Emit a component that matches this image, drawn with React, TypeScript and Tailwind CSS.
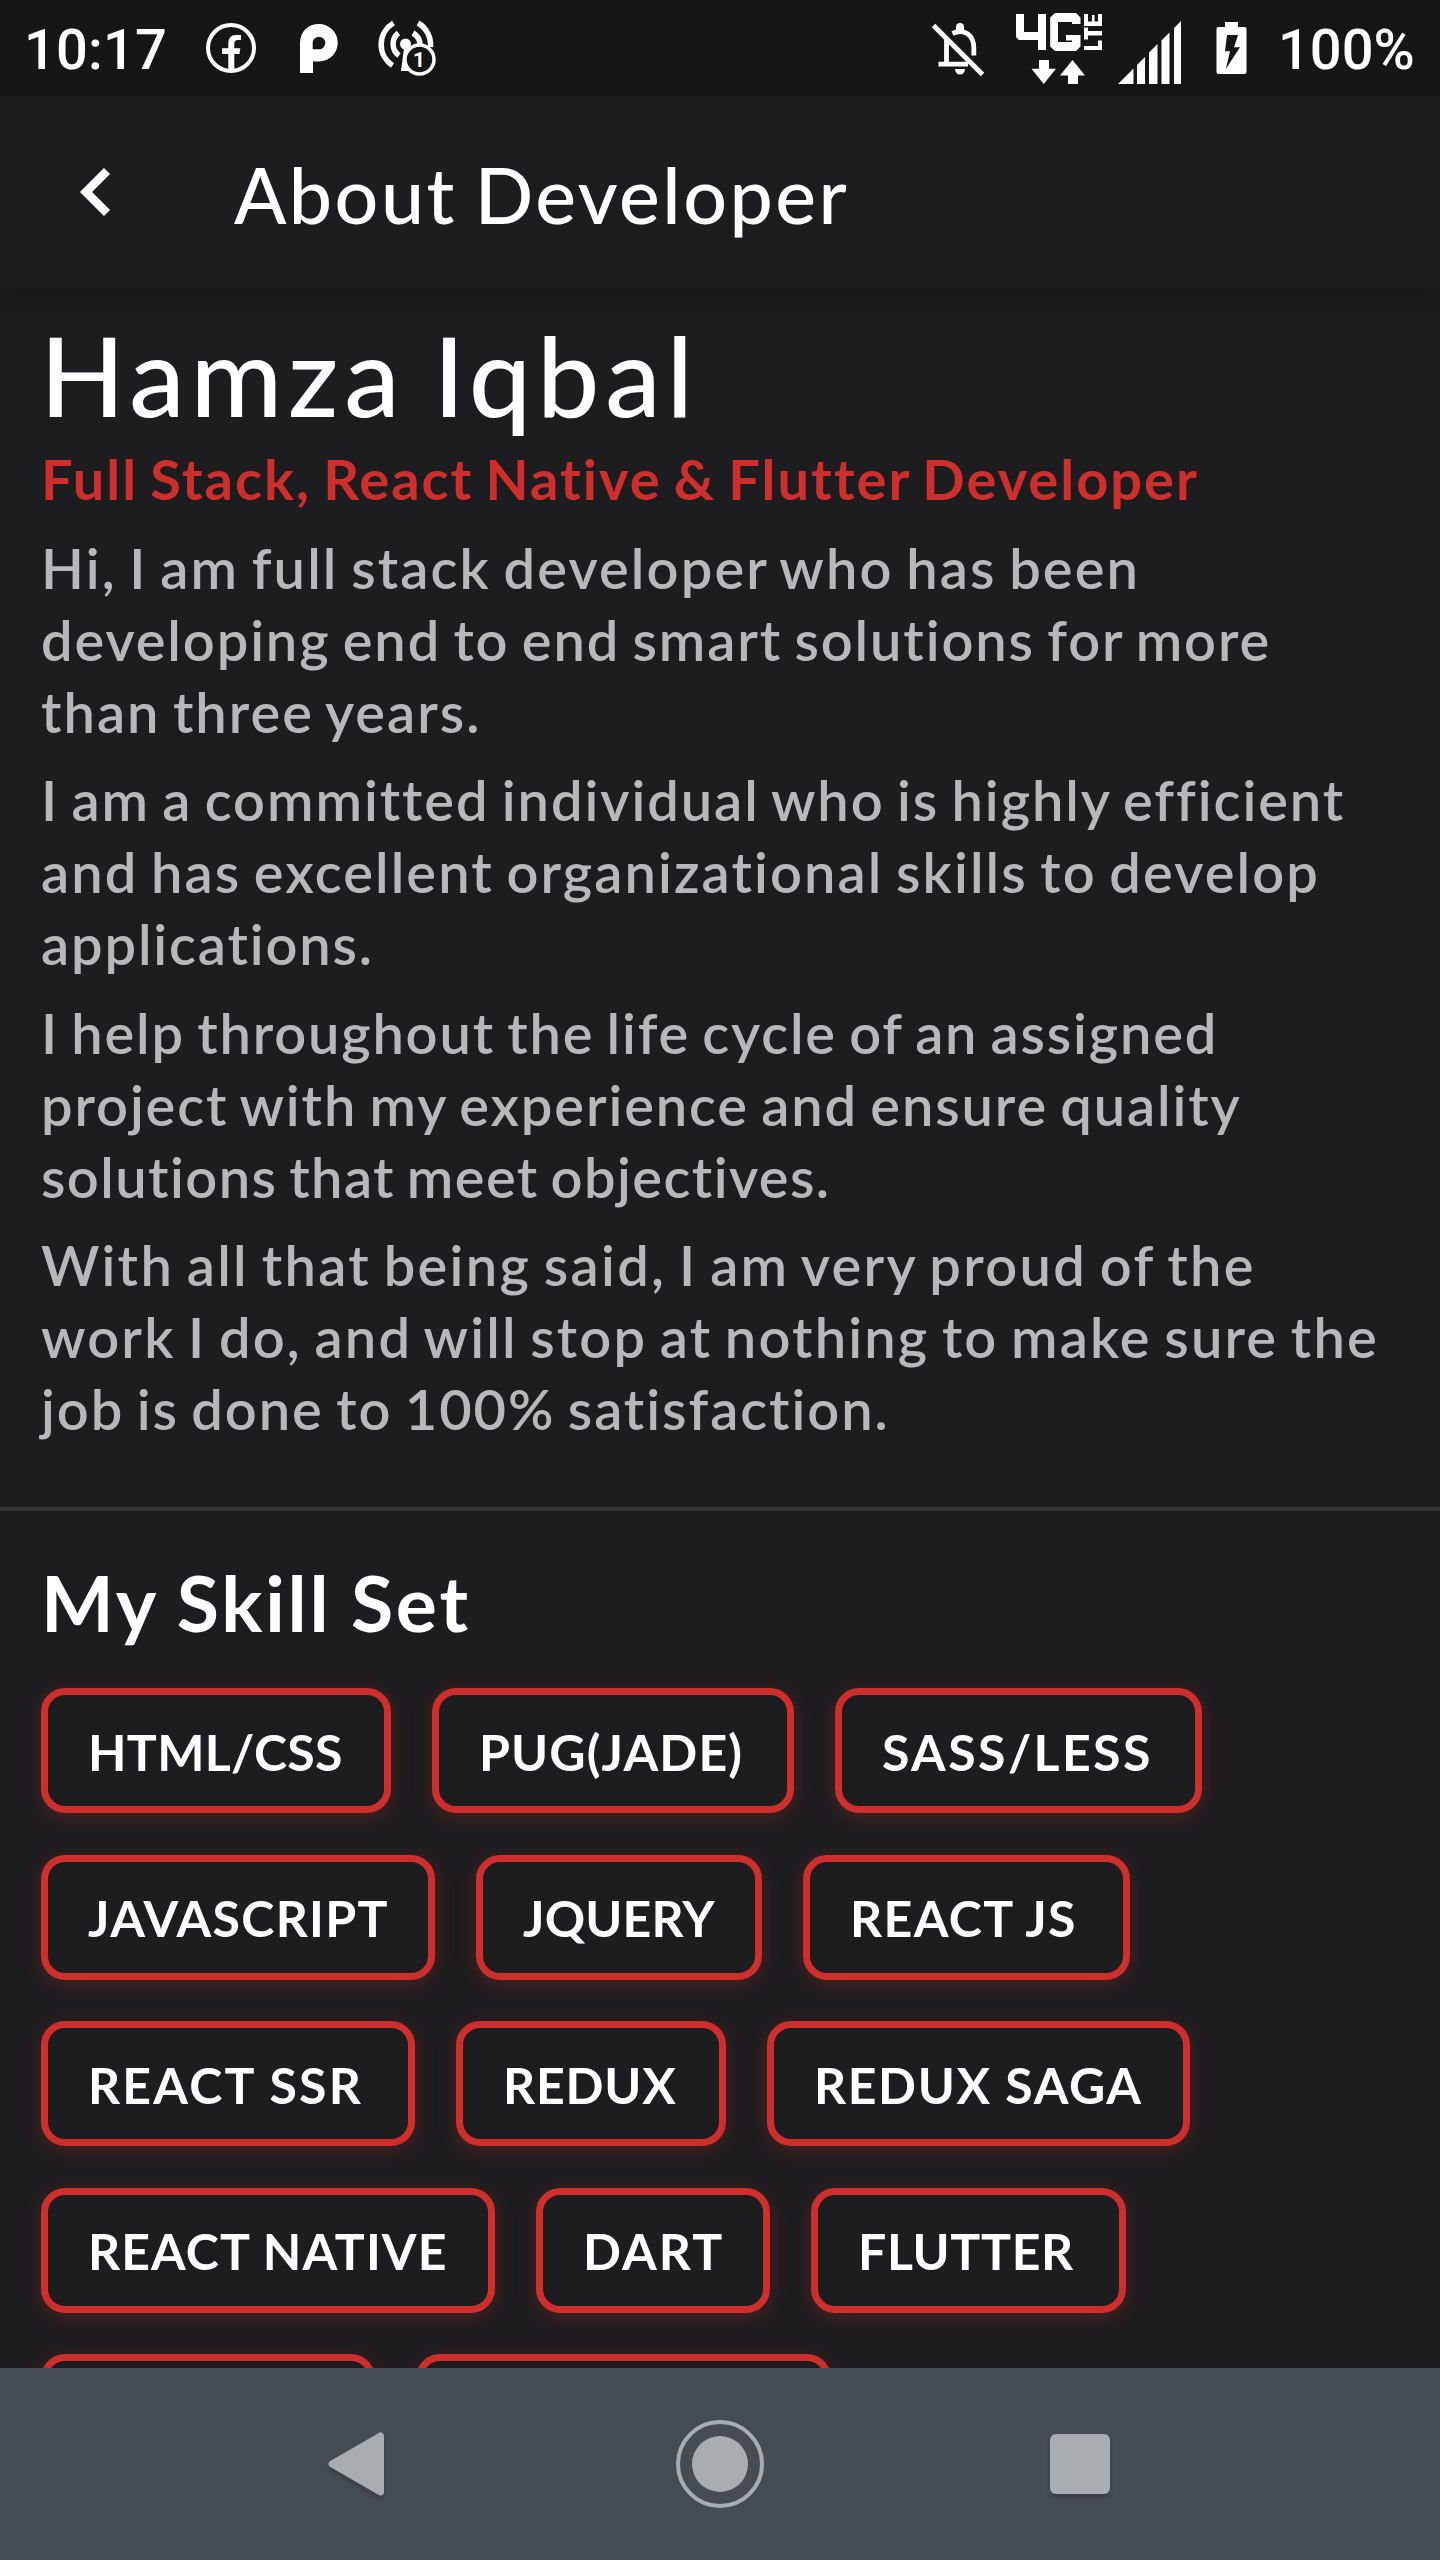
type Line = { text: string; tracking: string };

const paragraphs: Line[][] = [
  [
    { text: "Hi, I am full stack developer who has been", tracking: "tracking-[2.13px]" },
    { text: "developing end to end smart solutions for more", tracking: "tracking-[1.88px]" },
    { text: "than three years.", tracking: "tracking-[2px]" },
  ],
  [
    { text: "I am a committed individual who is highly efficient", tracking: "tracking-[1.93px]" },
    { text: "and has excellent organizational skills to develop", tracking: "tracking-[2.1px]" },
    { text: "applications.", tracking: "tracking-[1.85px]" },
  ],
  [
    { text: "I help throughout the life cycle of an assigned", tracking: "tracking-[1.82px]" },
    { text: "project with my experience and ensure quality", tracking: "tracking-[1.87px]" },
    { text: "solutions that meet objectives.", tracking: "tracking-[1.42px]" },
  ],
  [
    { text: "With all that being said, I am very proud of the", tracking: "tracking-[2.29px]" },
    { text: "work I do, and will stop at nothing to make sure the", tracking: "tracking-[2.15px]" },
    { text: "job is done to 100% satisfaction.", tracking: "tracking-[1.95px]" },
  ],
];

const skillRows: { name: string; style: string }[][] = [
  [
    { name: "HTML/CSS", style: "w-[350px] tracking-[0.3px]" },
    { name: "PUG(JADE)", style: "w-[362px] tracking-[1.1px]" },
    { name: "SASS/LESS", style: "w-[367px] tracking-[2.4px]" },
  ],
  [
    { name: "JAVASCRIPT", style: "w-[394px] tracking-[1.300px]" },
    { name: "JQUERY", style: "w-[286px] tracking-[0.2px]" },
    { name: "REACT JS", style: "w-[327px] tracking-[1.4px]" },
  ],
  [
    { name: "REACT SSR", style: "w-[374px] tracking-[2.2px]" },
    { name: "REDUX", style: "w-[270px] tracking-[0.8px]" },
    { name: "REDUX SAGA", style: "w-[423px] tracking-[1.6px]" },
  ],
  [
    { name: "REACT NATIVE", style: "w-[454px] tracking-[1.1px]" },
    { name: "DART", style: "w-[234px] tracking-[2.1px]" },
    { name: "FLUTTER", style: "w-[315px] tracking-[0.65px]" },
  ],
  [
    { name: "", style: "w-[334px]" },
    { name: "", style: "w-[415px]" },
  ],
];

function StatusBar() {
  return (
    <div className="flex h-24 shrink-0 items-center justify-between bg-[#161616] font-[Roboto] text-[56px] leading-none font-medium text-white">
      <div className="flex items-center">
        <div className="w-[200px] pt-[3px] pl-[24px] tracking-[0.2px]">10:17</div>
        <svg className="h-24 w-[62px]" viewBox="200 0 62 96" fill="white">
          <circle cx="231" cy="48" r="23" fill="none" stroke="white" strokeWidth="4" />
          <path d="M228.3 72V54H222V48.3H228.3V44C228.3 38 231 35 236 35H241V40H238C235.5 40 234.3 41.5 234.3 44V48.3H240.3L239.5 54H234.3V72Z" />
        </svg>
        <svg className="h-24 w-[108px]" viewBox="262 0 108 96" fill="white">
          <path
            fillRule="evenodd"
            d="M300 73V43C300 31.500 308 24 319 24A18.700 18.700 0 0 1 319 61.500H313V73ZM312.700 49.300V43A6.300 6.300 0 1 1 319 49.300Z"
          />
        </svg>
        <svg className="h-24 w-[70px]" viewBox="370 0 70 96" fill="none" stroke="white">
          <path
            d="M393.500 23A25 25 0 0 0 392.500 65.500M418 23A25 25 0 0 1 430.500 47M398.500 33A14 14 0 0 0 399 55.500M413 33A14 14 0 0 1 420 46"
            strokeWidth="5.500"
          />
          <circle cx="405.500" cy="44" r="5.500" fill="white" stroke="none" />
          <path d="M404 48H408L412 71H401Z" fill="white" stroke="none" />
          <circle cx="419.500" cy="59.500" r="14.500" fill="#161616" strokeWidth="3.500" />
          <text x="419" y="67" textAnchor="middle" fontFamily="Roboto" fontWeight="700" fontSize="21" fill="white" stroke="none">
            1
          </text>
        </svg>
      </div>
      <div className="flex items-center">
        <svg className="h-24 w-[70px]" viewBox="930 0 70 96" fill="none" stroke="white">
          <path
            d="M952.500 33.500C964 28 973.800 35 973.800 48V55.500M946.500 40V63M938.500 64.200H968"
            strokeWidth="4.800"
          />
          <path d="M956 33V27A4 4 0 0 1 964 27V33ZM955 69H965A5 5.500 0 0 1 955 69Z" fill="white" stroke="none" />
          <path d="M933.500 25.500L982.500 74.500" strokeWidth="5" />
        </svg>
        <svg className="h-24 w-[110px]" viewBox="1000 0 110 96" fill="white">
          <path d="M1016 14H1024V32H1038V14H1046V50H1038V40H1019L1016 37Z" />
          <path d="M1055 13H1076L1080.500 17.500V24H1072V22H1058V42H1072V40.500H1066V35H1080.500V46.500L1076 51H1055L1050.200 46.500V17.500Z" />
          <path d="M1084 50V46H1098V40.500H1102V50ZM1084 27.500H1088V31H1102V35.500H1088V39.500H1084ZM1084 14H1088V21.500H1092V15H1094.500V21.500H1098V14H1102V26H1084Z" />
          <path d="M1039 60H1049V68.700H1056L1043.700 84L1031.500 68.700H1039ZM1072.500 60L1085 75.500H1078V84H1068V75.500H1060Z" />
        </svg>
        <svg className="h-24 w-[80px]" viewBox="1110 0 80 96" fill="white">
          <path d="M1118 84L1133.500 68.500V84ZM1137 84V65L1145 57V84ZM1149 84V52.500L1157.500 44V84ZM1161.500 84V40.500L1169.500 32.500V84ZM1174 84V28L1181 21V84Z" />
        </svg>
        <svg className="h-24 w-[88px]" viewBox="1190 0 88 96" fill="white">
          <path
            fillRule="evenodd"
            d="M1225 27V22H1238V27H1244.500Q1246.500 27 1246.500 29V72Q1246.500 74 1244.500 74H1218.500Q1216.500 74 1216.500 72V29Q1216.500 27 1218.500 27ZM1227 35L1225 51.300H1230L1225.800 69L1240 47.300H1234L1238 35Z"
          />
        </svg>
        <div className="w-[162px] pt-[3px]">100%</div>
      </div>
    </div>
  );
}

function AppBar() {
  return (
    <header className="relative z-10 flex h-48 shrink-0 items-center bg-[#1d1d1f] shadow-[0_14px_28px_rgba(0,0,0,0.2)]">
      <svg className="ml-[72px] h-[72px] w-12" viewBox="72 156 48 72" fill="none" stroke="white" strokeWidth="8.500">
        <path d="M107 171L86 192L107 213" />
      </svg>
      <h1 className="ml-[114px] pt-[5px] text-[77px] leading-none font-medium tracking-[2.5px] text-white [word-spacing:-4px]">About Developer</h1>
    </header>
  );
}

function NavBar() {
  return (
    <nav className="flex h-48 shrink-0 items-center bg-[#454c52] pl-[308px]">
      <svg className="size-24 drop-shadow-[0_3px_2px_rgba(0,0,0,0.2)]" viewBox="0 0 96 96">
        <path d="M24 48L72.500 20V76Z" fill="#a9adb0" stroke="#a9adb0" strokeWidth="7" strokeLinejoin="round" />
      </svg>
      <svg className="ml-[268px] size-24" viewBox="0 0 96 96" fill="#a9adb0">
        <circle cx="48" cy="48" r="42" fill="none" stroke="#a9adb0" strokeWidth="4" />
        <circle cx="48" cy="48" r="28" />
      </svg>
      <div className="ml-[282px] size-[60px] rounded-[6px] bg-[#a9adb0] shadow-[0_3px_4px_rgba(0,0,0,0.2)]" />
    </nav>
  );
}

export default function App() {
  return (
    <div className="flex h-[2560px] w-[1440px] flex-col overflow-hidden bg-[#1d1d1f] font-[Lato,sans-serif]">
      <StatusBar />
      <AppBar />
      <main className="flex-1 overflow-hidden pt-[17px]">
        <section className="px-[41px] whitespace-nowrap">
          <h2 className="-ml-px text-[111px] leading-[138px] font-medium tracking-[5.8px] text-white [word-spacing:-6px]">Hamza Iqbal</h2>
          <p className="text-[56px] leading-[72px] font-bold tracking-[2px] text-[#ce2e2c] [word-spacing:-3.5px]">
            Full Stack, React Native &amp; Flutter Developer
          </p>
          {paragraphs.map((lines, i) => (
            <p
              key={i}
              className="mt-[16.5px] text-[56px] leading-[72px] font-semibold text-[#b8b8b9] [word-spacing:-3.5px]"
            >
              {lines.map((line) => (
                <span key={line.text} className={`block ${line.tracking}`}>
                  {line.text}
                </span>
              ))}
            </p>
          ))}
        </section>
        <div className="mt-[62px] h-1 bg-[#343436]" />
        <section className="mt-[41px] px-[41px]">
          <h3 className="text-[77px] leading-[100px] font-bold tracking-[2.8px] text-white [word-spacing:-2px]">My Skill Set</h3>
          <div className="mt-9 flex flex-col gap-[41.600px]">
            {skillRows.map((row, i) => (
              <div key={i} className="flex gap-[41px]">
                {row.map((skill, j) => (
                  <div
                    key={j}
                    className={`flex h-[125px] items-center rounded-[24px] border-[7px] border-[#ce2e2c] pt-[2px] pl-[40px] text-[50px] leading-none font-bold whitespace-nowrap text-white shadow-[0_4px_20px_rgba(206,46,44,0.28)] ${skill.style}`}
                  >
                    {skill.name}
                  </div>
                ))}
              </div>
            ))}
          </div>
        </section>
      </main>
      <NavBar />
    </div>
  );
}
